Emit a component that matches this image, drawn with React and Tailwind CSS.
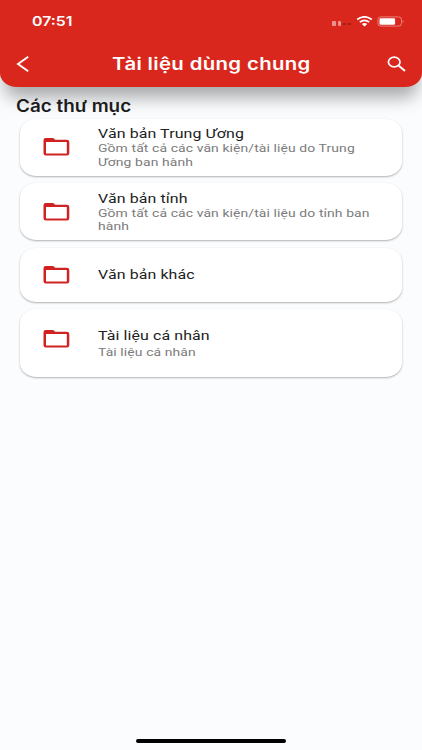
import clsx from "clsx";

const folders = [
  {
    title: "Văn bản Trung Ương",
    lines: ["Gồm tất cả các văn kiện/tài liệu do Trung", "Ương ban hành"],
    box: "h-[57px] mb-[7px]",
    text: "pt-[7px]",
    icon: "pt-[19px]",
  },
  {
    title: "Văn bản tỉnh",
    lines: ["Gồm tất cả các văn kiện/tài liệu do tỉnh ban", "hành"],
    box: "h-[57px] mb-2",
    text: "pt-[7.5px]",
    icon: "pt-5",
  },
  {
    title: "Văn bản khác",
    lines: [],
    box: "h-[54px] mb-[7px]",
    text: "pt-[19px]",
    icon: "pt-[18px]",
  },
  {
    title: "Tài liệu cá nhân",
    lines: ["Tài liệu cá nhân"],
    box: "h-[68px]",
    text: "pt-[19px]",
    icon: "pt-[21px]",
    gap: "mt-[2px]",
  },
];

const FolderIcon = () => (
  <svg className="block h-[18px] w-[27px]" viewBox="0 0 27 18">
    <path
      d="M2.6 0H9.6Q10.6 0 11.2 .8L12 1.8H24Q26.3 1.8 26.3 4V15.3Q26.3 17.6 24 17.6H2.8Q.5 17.6 .5 15.3V2.2Q.5 0 2.6 0ZM3 4.1V15.5H23.8V4.1Z"
      fill="#cf2323"
      fillRule="evenodd"
    />
  </svg>
);

const StatusBar = () => (
  <div className="flex h-[42px] items-center pl-8 pr-[17px]">
    <span className="origin-left scale-x-[1.22] text-[13px] font-semibold leading-4">07:51</span>
    <div className="ml-auto flex items-center">
      <div className="mr-[5px] mt-[5px] flex items-end gap-[2px]">
        <i className="h-[5px] w-[3.5px] rounded-[1px] bg-white/50" />
        <i className="h-[5px] w-[3.5px] rounded-[1px] bg-white/50" />
        <i className="mb-px h-[2px] w-[3px] bg-black/25" />
        <i className="mb-px h-[2px] w-[3px] bg-black/25" />
      </div>
      <svg className="mr-1 h-[11px] w-[17px]" viewBox="0 0 17 11" fill="none" stroke="#fff">
        <path d="M1.2 3.6Q8.5 -1.8 15.8 3.6" strokeWidth="1.9" />
        <path d="M3.8 6.1Q8.5 2.6 13.2 6.1" strokeWidth="1.7" />
        <path d="M5.8 8Q8.5 6 11.2 8L8.5 10.4Z" fill="#fff" stroke="none" />
      </svg>
      <svg className="h-[11px] w-7" viewBox="0 0 28 11">
        <rect x=".9" y=".9" width="23.6" height="9.2" rx="2.8" fill="none" stroke="#fff" strokeOpacity=".45" strokeWidth=".9" />
        <rect x="2.5" y="2.2" width="15.6" height="6.6" rx="1.4" fill="#fff" />
        <path d="M25.8 3.7Q27.4 5.5 25.8 7.3Z" fill="#fff" fillOpacity=".55" />
      </svg>
    </div>
  </div>
);

const Header = () => (
  <header className="h-[87px] bg-[#da271d] text-white shadow-[0_15px_18px_-5px_rgba(0,0,0,0.35)] [border-radius:0_0_17px_17px_/_0_0_14px_14px]">
    <StatusBar />
    <div className="flex h-[43px] items-center justify-between px-4">
      <button type="button" aria-label="Back">
        <svg className="block h-4 w-[13px]" viewBox="0 0 13 16" fill="none" stroke="#fff" strokeWidth="1.9">
          <path d="M12.2 .8L2 8L12.2 15.2" />
        </svg>
      </button>
      <h1 className="ml-[7px] scale-x-[1.22] whitespace-nowrap text-[16.7px] font-semibold leading-6 tracking-[0.29px]">
        Tài liệu dùng chung
      </h1>
      <button type="button" aria-label="Search">
        <svg className="block h-4 w-[19px]" viewBox="0 0 19 16" fill="none" stroke="#fff" strokeWidth="1.7">
          <ellipse cx="7.2" cy="6" rx="5.8" ry="4.9" />
          <path d="M11.5 9.5L18 15" strokeWidth="2" />
        </svg>
      </button>
    </div>
  </header>
);

const FolderCard = ({ title, lines, box, text, icon, gap }) => (
  <li
    className={clsx(
      "flex bg-white pl-[23px] shadow-[0_1px_2px_rgba(0,0,0,0.3)] [border-radius:17px_/_14px]",
      box
    )}
  >
    <div className={clsx("w-[55px] shrink-0", icon)}>
      <FolderIcon />
    </div>
    <div
      className={clsx(
        "origin-left scale-x-[1.19] whitespace-nowrap font-['Roboto','Liberation_Sans',sans-serif] tracking-[0.09px]",
        text
      )}
    >
      <h3 className="text-[13.4px] leading-4 text-[#222]">{title}</h3>
      <div className={clsx("text-[11.7px] leading-[13.5px] text-[#7b7b7b]", gap)}>
        {lines.map((line) => (
          <p key={line}>{line}</p>
        ))}
      </div>
    </div>
  </li>
);

export default function App() {
  return (
    <div className="flex h-[750px] w-[422px] flex-col overflow-hidden bg-[#fbfcfe] font-['Inter','Liberation_Sans',sans-serif]">
      <Header />
      <main className="flex-1 px-5 pt-[7px]">
        <h2 className="-ml-1 mb-px w-fit origin-left scale-x-[1.13] whitespace-nowrap text-[16.7px] font-semibold leading-6 text-[#1c1c1c]">
          Các thư mục
        </h2>
        <ul className="w-[382px]">
          {folders.map((folder) => (
            <FolderCard key={folder.title} {...folder} />
          ))}
        </ul>
      </main>
      <div className="mx-auto mb-[7px] h-1 w-[150px] rounded-full bg-black" />
    </div>
  );
}
